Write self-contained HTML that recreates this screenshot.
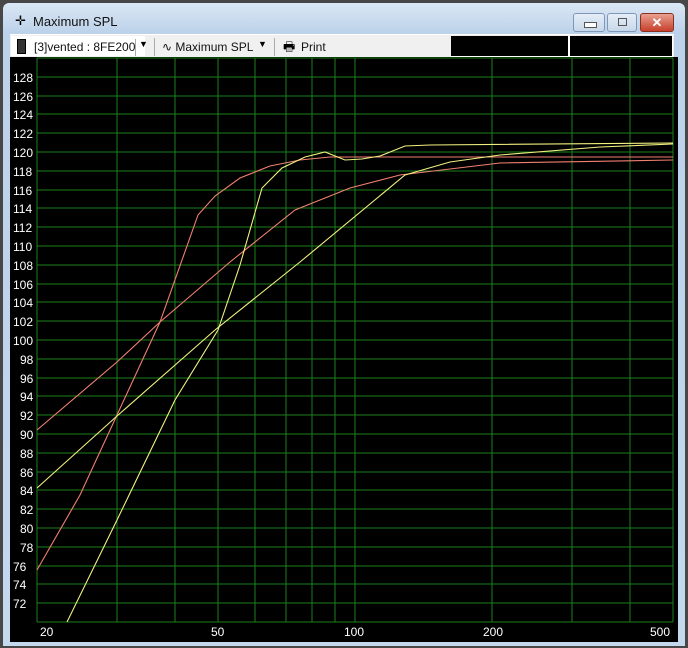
<!DOCTYPE html>
<html><head><style>
body{margin:0;width:688px;height:648px;overflow:hidden;background:#474747;font-family:"Liberation Sans",sans-serif;}
#win{position:absolute;left:3px;top:3px;width:682px;height:643px;border-radius:6px 6px 0 0;background:linear-gradient(#dbe7f4,#bcd2ea 30px,#c4d8ee);}
.t{position:absolute;left:30px;top:11px;font-size:13px;color:#111;}
#tb{position:absolute;left:7px;top:31px;width:664px;height:23px;background:#f0f0f0;border-top:1px solid #fff;}
.blk{position:absolute;top:34px;height:20px;background:#000;}
#plot{position:absolute;left:7px;top:54px;width:668px;height:585px;background:#000;}
.btn{position:absolute;top:10px;height:17px;border-radius:3px;border:1px solid #8098b8;background:linear-gradient(#e4edf7,#c8d8ea);}
</style></head><body>
<div id="win">
<div style="position:absolute;left:12px;top:10px;font-size:13px">✛</div>
<div class="t">Maximum SPL</div>
<div class="btn" style="left:570px;width:30px"><div style="position:absolute;left:10px;top:8px;width:11px;height:4px;border:1px solid #555;background:#fff"></div></div>
<div class="btn" style="left:604px;width:28px"><div style="position:absolute;left:10px;top:4px;width:7px;height:6px;border:1px solid #555"></div></div>
<div class="btn" style="left:637px;width:32px;background:linear-gradient(#e8a090,#c8402c);border-color:#8a3020;color:#fff;font-weight:bold;font-size:13px;text-align:center;line-height:17px">✕</div>
<div id="tb"></div>
<div style="position:absolute;left:8px;top:33px;width:134px;height:20px;background:#fff;"></div>
<div style="position:absolute;left:14px;top:36px;width:7px;height:13px;background:#333;border:1px solid #000"></div>
<div style="position:absolute;left:31px;top:37px;font-size:12px;color:#111">[3]vented : 8FE200</div>
<div style="position:absolute;left:132px;top:36px;width:1px;height:17px;background:#aaa"></div>
<div style="position:absolute;left:136px;top:36px;font-size:9px">▼</div>
<div style="position:absolute;left:151px;top:35px;width:1px;height:18px;background:#aaa"></div>
<div style="position:absolute;left:159px;top:37px;font-size:12px;color:#111">∿ Maximum SPL</div>
<div style="position:absolute;left:255px;top:36px;font-size:9px">▼</div>
<div style="position:absolute;left:271px;top:35px;width:1px;height:18px;background:#aaa"></div>
<div style="position:absolute;left:280px;top:35px;font-size:13px">🖶</div>
<div style="position:absolute;left:298px;top:37px;font-size:12px;color:#111">Print</div>
<div style="position:absolute;left:448px;top:33px;width:222px;height:22px;background:#fff"></div>
</div>
<div class="blk" style="left:451px;width:117px;top:36px"></div>
<div class="blk" style="left:570px;width:102px;top:36px"></div>
<div id="plot" style="left:10px;top:57px"></div>
<svg width="688" height="648" style="position:absolute;left:0;top:0" font-family="Liberation Sans" font-size="12" fill="#fff">
<g stroke="#1d7f1d" stroke-width="1" fill="none">
<path d="M37 58V622M117 58V622M175 58V622M218 58V622M255 58V622M286 58V622M312 58V622M335 58V622M355 58V622M492 58V622M572 58V622M630 58V622M673 58V622"/>
<path d="M37 58H673M37 77H673M37 96H673M37 114H673M37 133H673M37 152H673M37 171H673M37 190H673M37 208H673M37 227H673M37 246H673M37 265H673M37 284H673M37 302H673M37 321H673M37 340H673M37 359H673M37 378H673M37 396H673M37 415H673M37 434H673M37 453H673M37 472H673M37 490H673M37 509H673M37 528H673M37 547H673M37 566H673M37 584H673M37 603H673M37 622H673"/>
</g>
<g text-anchor="start">
<text x="13" y="82">128</text><text x="13" y="101">126</text><text x="13" y="119">124</text><text x="13" y="138">122</text><text x="13" y="157">120</text><text x="13" y="176">118</text><text x="13" y="195">116</text><text x="13" y="213">114</text><text x="13" y="232">112</text><text x="13" y="251">110</text><text x="13" y="270">108</text><text x="13" y="289">106</text><text x="13" y="307">104</text><text x="13" y="326">102</text><text x="13" y="345">100</text><text x="20" y="364">98</text><text x="20" y="383">96</text><text x="20" y="401">94</text><text x="20" y="420">92</text><text x="20" y="439">90</text><text x="20" y="458">88</text><text x="20" y="477">86</text><text x="20" y="495">84</text><text x="20" y="514">82</text><text x="20" y="533">80</text><text x="20" y="552">78</text><text x="13" y="571">76</text><text x="13" y="589">74</text><text x="13" y="608">72</text>
<text x="40" y="636">20</text><text x="211" y="636">50</text><text x="344" y="636">100</text><text x="483" y="636">200</text><text x="650" y="636">500</text>
</g>
<g fill="none" stroke-width="1.1">
<path stroke="#f08070" d="M37 570L80 495L117 415L160 322L198 215L215 196L240 178L270 166L300 160L330 157L673 157"/>
<path stroke="#f08070" d="M37 430L117 362L160 322L230 262L295 210L350 188L400 175L500 163L673 160"/>
<path stroke="#f0f080" d="M67 622L117 520L175 400L218 330L240 265L262 188L282 168L305 157L325 152L345 160L362 159L380 156L405 146L430 145L673 143"/>
<path stroke="#f0f080" d="M37 488L117 416L215 330L300 262L405 175L450 162L500 155L600 147L673 144"/>
</g>
</svg>
</body></html>
